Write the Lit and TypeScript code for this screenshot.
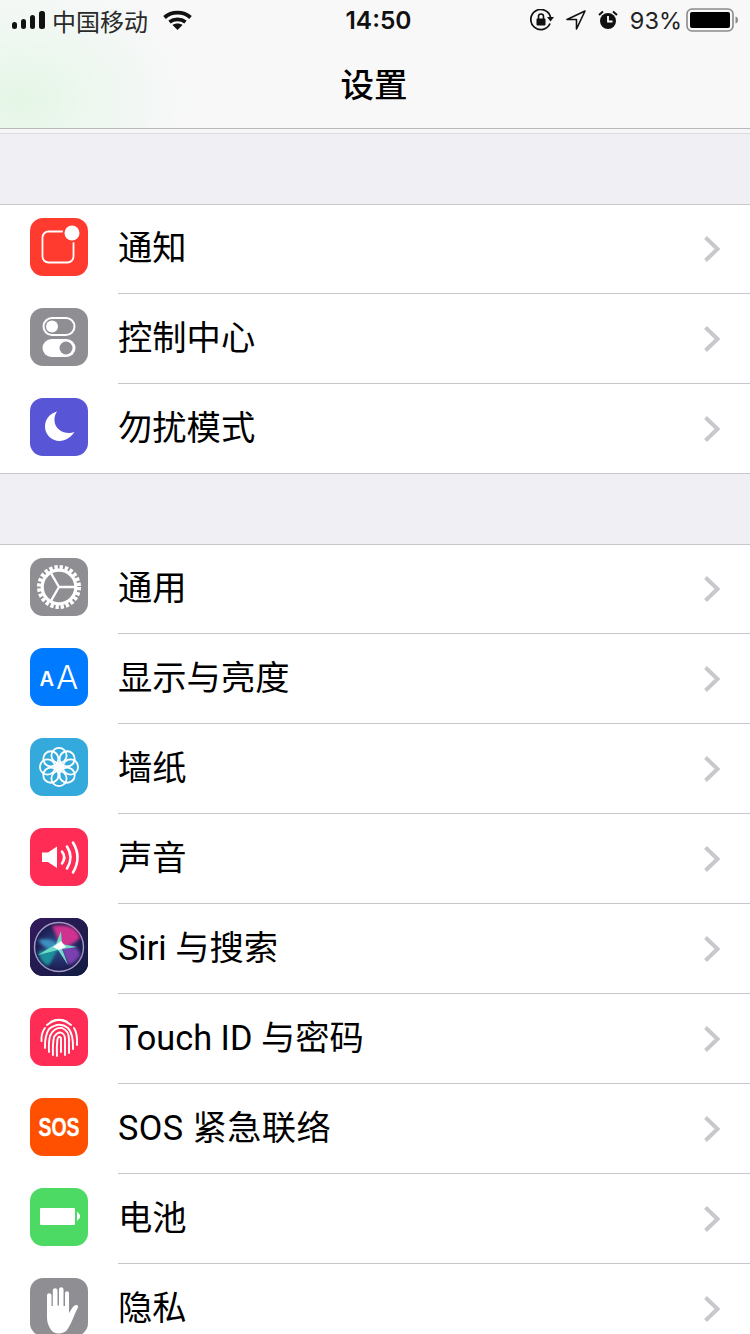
import { LitElement, html, css, svg } from "lit";
import { customElement } from "lit/decorators.js";

const gear = svg`
  <circle cx="29" cy="29" r="20" fill="none" stroke="#fff" stroke-width="4" stroke-dasharray="3.36 1.876"/>
  <circle cx="29" cy="29" r="16.8" fill="none" stroke="#fff" stroke-width="3.2"/>
  <path d="M29 29L46 29M29 29L20.5 14.3M29 29L20.5 43.7" stroke="#fff" stroke-width="2.3" fill="none"/>`;

const petals = [0, 45, 90, 135, 180, 225, 270, 315].map((a) => {
  const r = (a * Math.PI) / 180;
  return svg`<circle cx=${29 + 11.5 * Math.cos(r)} cy=${29 + 11.5 * Math.sin(r)} r="7.6" fill="none" stroke="#fff" stroke-width="1.8"/>`;
});

const icons: Record<string, unknown> = {
  notify: svg`
    <rect x="12.500" y="13.500" width="31" height="31" rx="6" fill="none" stroke="#fff" stroke-width="1.800"/>
    <circle cx="42" cy="15" r="9.500" fill="#ff3b30"/>
    <circle cx="42" cy="15" r="7.500" fill="#fff"/>`,
  control: svg`
    <rect x="13.500" y="10" width="31" height="17" rx="8.500" fill="none" stroke="#fff" stroke-width="2"/>
    <circle cx="22" cy="18.500" r="6" fill="#fff"/>
    <rect x="12.500" y="31" width="33" height="18" rx="9" fill="#fff"/>
    <circle cx="36" cy="40" r="6.500" fill="#8e8e93"/>`,
  moon: svg`<path d="M27 13.500C19.500 15.500 15 21.500 15 28.500C15 36.500 21.500 43 29.500 43C35.500 43 40.500 39.500 44.500 34C36 37.500 25 32 24.500 23C24.300 19.500 25 16.500 27 13.500Z" fill="#fff"/>`,
  gear,
  text: svg`
    <text x="9.500" y="38" class="sa">A</text>
    <text x="26" y="41" class="la">A</text>`,
  flower: svg`${petals}<circle cx="29" cy="29" r="3.600" fill="#fff"/>`,
  sound: svg`
    <path d="M12 24.500H18L27 18.500V40L18 34H12Z" fill="#fff"/>
    <path d="M32 23.500Q36.500 29.500 32 35.500M37 18.500Q44 29.500 37 40.500M43 14.500Q52 29.500 43 44.500" fill="none" stroke="#fff" stroke-width="2.600" stroke-linecap="round"/>`,
  siri: svg`
    <defs>
      <linearGradient id="sb" x1="0" y1="0" x2="1" y2="1"><stop offset="0" stop-color="#341a5e"/><stop offset="1" stop-color="#101c42"/></linearGradient>
      <radialGradient id="sd"><stop offset="0" stop-color="#2f4f8f"/><stop offset="1" stop-color="#1b1a4e"/></radialGradient>
      <filter id="sf"><feGaussianBlur stdDeviation="1.400"/></filter>
      <filter id="sg"><feGaussianBlur stdDeviation="0.600"/></filter>
    </defs>
    <rect width="58" height="58" fill="url(#sb)"/>
    <circle cx="29" cy="29" r="24.500" fill="url(#sd)" stroke="#a39bc4" stroke-width="1.400"/>
    <g filter="url(#sf)">
      <path d="M8 22Q25 18 29 30Q18 36 8 22Z" fill="#3d8fc0"/>
      <path d="M22 8Q46 4 50 20Q40 30 30 28Q26 16 22 8Z" fill="#d0318f"/>
      <path d="M30 28Q50 26 50 38Q42 48 38 46Z" fill="#7a3fb0"/>
      <path d="M8 34Q20 30 28 30Q22 44 18 48Q10 44 8 34Z" fill="#1f8f9c"/>
    </g>
    <g filter="url(#sg)">
      <path d="M8 37L26 26L31 13L32 26L47 29L32 31L38 47L28 32Z" fill="#6fdcc8"/>
      <path d="M23 29L31 23L36 29L29 32Z" fill="#fff"/>
    </g>`,
  touch: svg`
    <g fill="none" stroke="#fff" stroke-width="1.900" stroke-linecap="round">
      <path d="M17 17Q29 7 41 17"/>
      <path d="M11.500 33Q11 25 15 20M21 13.500Q29 10 37 13.500M44 20Q47.500 25 47 37"/>
      <path d="M15 40Q14.500 28 19 21Q29 13 38 20Q43.500 26 43 41"/>
      <path d="M19 44Q18.500 34 20 28Q24 19 32 20Q39 23 39 31V45"/>
      <path d="M23 47Q22.500 36 24 29Q28 23 32 25Q35.500 27 35 33V47"/>
      <path d="M27 48Q26.500 38 27.500 31Q29 27 31 30V44"/>
    </g>`,
  sos: svg`<text class="sos" transform="translate(29 38) scale(0.78 1)">SOS</text>`,
  battery: svg`
    <rect x="10" y="20" width="35" height="17" rx="1" fill="#fff"/>
    <path d="M47 23.500L50 27V29.500L47 33Z" fill="#fff"/>`,
  hand: svg`
    <path d="M17 40V17.500C17 14.500 21.500 14.500 21.500 17.500V28H22.800V12.500C22.800 9.500 27.500 9.500 27.500 12.500V27.500H29V11.500C29 8.500 33.500 8.500 33.500 11.500V28H35V15.500C35 12.500 39 12.500 39 15.500V35C41 32.500 43 27.500 46 27C48 26.700 48.500 28.500 47.500 30.500C44 37 41.500 46 37 52C34 56 25 57 21.500 52.500C19 49 17 45 17 40Z" fill="#fff"/>`,
};

type Row = { key: string; bg: string; label: string; wide?: boolean };

const groupA: Row[] = [
  { key: "notify", bg: "#ff3b30", label: "通知" },
  { key: "control", bg: "#8e8e93", label: "控制中心" },
  { key: "moon", bg: "#5856d6", label: "勿扰模式" },
];
const groupB: Row[] = [
  { key: "gear", bg: "#8e8e93", label: "通用" },
  { key: "text", bg: "#007aff", label: "显示与亮度" },
  { key: "flower", bg: "#34aadc", label: "墙纸" },
  { key: "sound", bg: "#ff2d55", label: "声音" },
  { key: "siri", bg: "#1a1a40", label: "Siri 与搜索" },
  { key: "touch", bg: "#ff2d55", label: "Touch ID 与密码" },
  { key: "sos", bg: "#ff4f00", label: "SOS 紧急联络", wide: true },
  { key: "battery", bg: "#4cd964", label: "电池" },
  { key: "hand", bg: "#8e8e93", label: "隐私" },
];

@customElement("app-root")
export class AppRoot extends LitElement {
  static styles = css`
    :host {
      display: block;
      width: 750px;
      height: 1334px;
      overflow: hidden;
      background: #efeff4;
      font-family: Inter, "Noto Sans CJK SC", sans-serif;
      color: #000;
    }
    .nav {
      height: 128px;
      border-bottom: 1px solid #b8b8b8;
      background:
        radial-gradient(ellipse 170px 125px at 20px 100px, #e4f6e6 0%, rgba(234, 247, 236, 0.65) 50%, rgba(248, 248, 249, 0) 100%),
        #f8f8f9;
    }
    .status {
      height: 40px;
      display: grid;
      grid-template-columns: 1fr auto 1fr;
      align-items: center;
      padding: 0 11px 0 12px;
    }
    .left, .right {
      display: flex;
      align-items: center;
    }
    .right { justify-content: flex-end; }
    .signal { display: block; margin-right: 7px; }
    .carrier {
      font-family: "Noto Sans CJK SC", sans-serif;
      font-size: 24px;
      color: #2a2a2a;
      margin-right: 15px;
    }
    .time {
      font-size: 24.500px;
      font-weight: 600;
      color: #111;
      margin-left: 6px;
    }
    .pct {
      font-size: 23.500px;
      font-weight: 400;
      color: #222;
      margin: 0 4px 0 12px;
    }
    .ri { display: block; margin-right: 12px; }
    .ri.flush { margin-right: 0; }
    .title {
      height: 84px;
      padding-bottom: 4px;
      padding-right: 2px;
      display: flex;
      justify-content: center;
      align-items: center;
      font-family: "Noto Sans CJK SC", sans-serif;
      font-size: 33.500px;
      font-weight: 500;
      color: #000;
    }
    .top-tint {
      height: 4px;
      background: #f6f6f8;
    }
    .gap1 {
      height: 70px;
      border-top: 1px solid #dcdcde;
      border-bottom: 1px solid #c8c7cc;
    }
    .gap2 {
      height: 70px;
      border-bottom: 1px solid #c8c7cc;
    }
    .group {
      background: #fff;
      border-bottom: 1px solid #c8c7cc;
    }
    .row {
      display: flex;
      align-items: flex-start;
      height: 89px;
      padding: 14px 0 0 30px;
      box-sizing: border-box;
    }
    .row.first { height: 88px; padding-top: 13px; }
    .icon {
      width: 58px;
      height: 58px;
      border-radius: 13px;
      overflow: hidden;
      flex: none;
      display: block;
    }
    .body {
      flex: 1;
      display: flex;
      align-items: center;
      justify-content: space-between;
      height: 58px;
      margin-left: 30px;
      padding-right: 29px;
    }
    .label {
      font-family: Roboto, "Noto Sans CJK SC", sans-serif;
      font-size: 34.300px;
      line-height: 58px;
      font-weight: 400;
      color: #000;
      white-space: nowrap;
      margin-top: 2px;
    }
    .label.wide { letter-spacing: 0.4px; }
    .chev { display: block; margin-top: 4px; }
    .divider {
      height: 1px;
      margin-left: 118px;
      background: #c8c7cc;
    }
    svg text { font-family: Inter, Roboto, sans-serif; fill: #fff; }
    .sa { font-size: 20px; font-weight: 600; }
    .la { font-size: 33px; font-weight: 300; }
    .sos {
      font-family: "Liberation Sans", Roboto, sans-serif;
      font-size: 25px;
      font-weight: 700;
      text-anchor: middle;
      stroke: #fff;
      stroke-width: 0.3px;
    }
  `;

  private row(r: Row, i: number) {
    return html`
      ${i > 0 ? html`<div class="divider"></div>` : ""}
      <div class="row ${i === 0 ? "first" : ""}">
        <svg class="icon" viewBox="0 0 58 58" width="58" height="58" style="background:${r.bg}">${icons[r.key]}</svg>
        <div class="body">
          <span class="label ${r.wide ? "wide" : ""}">${r.label}</span>
          <svg class="chev" width="18" height="28" viewBox="0 0 18 28">
            <path d="M2.500 2.500L14.500 14L2.500 25.500" fill="none" stroke="#c7c7cc" stroke-width="4"/>
          </svg>
        </div>
      </div>
    `;
  }

  render() {
    return html`
      <div class="nav">
        <div class="status">
          <div class="left">
            <svg class="signal" width="33" height="20" viewBox="0 0 33 20" fill="#111">
              <rect x="0" y="12" width="5" height="7" rx="2.500"/>
              <rect x="9" y="9" width="5" height="10" rx="2.500"/>
              <rect x="18" y="5" width="5" height="14" rx="2.500"/>
              <rect x="27" y="1" width="6" height="18" rx="2.500"/>
            </svg>
            <span class="carrier">中国移动</span>
            <svg width="29" height="21" viewBox="0 0 29 21" fill="none" stroke="#111" stroke-width="3.800">
              <path d="M1.500 7.500C8.500 1 20.500 1 27.500 7.500"/>
              <path d="M6.500 12C11 8.500 18 8.500 22.500 12"/>
              <path d="M14.500 20L9.500 15C12 13 17 13 19.500 15Z" fill="#111" stroke="none"/>
            </svg>
          </div>
          <div class="time">14:50</div>
          <div class="right">
            <svg class="ri" width="24" height="22" viewBox="0 0 24 22" fill="none">
              <path d="M20 14.500A10 10 0 1 1 20.500 8" stroke="#111" stroke-width="1.800"/>
              <path d="M17 8H24L20.500 12.500Z" fill="#111"/>
              <rect x="6.500" y="9.500" width="9" height="7" rx="1" fill="#111"/>
              <path d="M8.500 10V7.500A2.500 2.500 0 0 1 13.500 7.500V10" stroke="#111" stroke-width="1.600"/>
            </svg>
            <svg class="ri" width="20" height="20" viewBox="0 0 20 20" fill="none">
              <path d="M19 1L10.500 19V9.500H1Z" stroke="#111" stroke-width="1.600" stroke-linejoin="round"/>
            </svg>
            <svg class="ri flush" width="20" height="20" viewBox="0 0 20 20">
              <circle cx="10" cy="11" r="8" fill="#111"/>
              <path d="M10 6V11.500H14.500" fill="none" stroke="#fff" stroke-width="1.800"/>
              <path d="M1 5L5 1.500M19 5L15 1.500" stroke="#111" stroke-width="2"/>
            </svg>
            <span class="pct">93%</span>
            <svg class="ri flush" width="53" height="24" viewBox="0 0 53 24">
              <rect x="1" y="1" width="46" height="22" rx="5" fill="none" stroke="#8a8a8a" stroke-width="1.600"/>
              <rect x="4" y="4" width="40" height="16" rx="2" fill="#000"/>
              <path d="M49.500 8.500C51.500 9 52 10.500 52 12C52 13.500 51.500 15 49.500 15.500Z" fill="#8a8a8a"/>
            </svg>
          </div>
        </div>
        <div class="title">设置</div>
      </div>
      <div class="top-tint"></div>
      <div class="gap1"></div>
      <div class="group">${groupA.map((r, i) => this.row(r, i))}</div>
      <div class="gap2"></div>
      <div class="group">${groupB.map((r, i) => this.row(r, i))}</div>
    `;
  }
}
